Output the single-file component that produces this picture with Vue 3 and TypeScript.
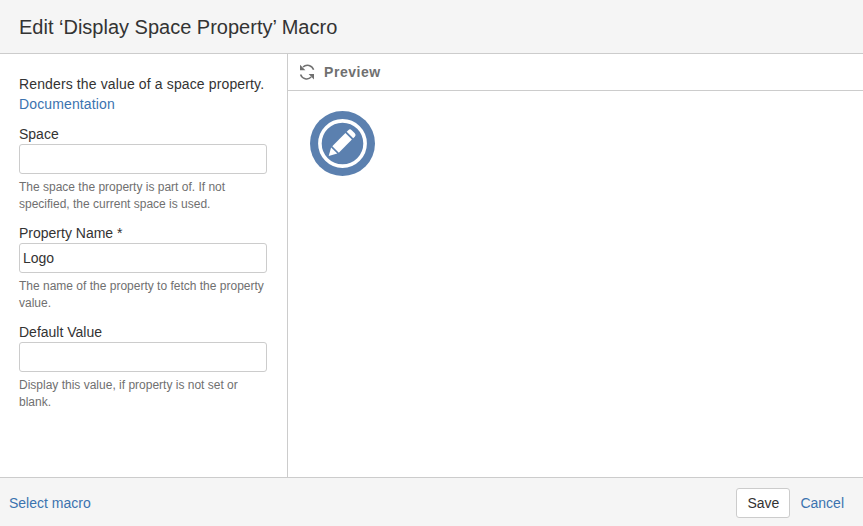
<template>
  <div class="dialog">
    <header class="head">
      <h2>Edit ‘Display Space Property’ Macro</h2>
    </header>
    <div class="body">
      <form class="params" @submit.prevent>
        <p class="intro">
          Renders the value of a space property.<br>
          <a href="#">Documentation</a>
        </p>
        <div v-for="field in fields" :key="field.label" class="field">
          <label>{{ field.label }}</label>
          <input type="text" :value="field.value">
          <div class="desc">{{ field.desc }}</div>
        </div>
      </form>
      <section class="preview">
        <div class="preview-head">
          <svg class="refresh" width="16" height="16" viewBox="0 0 16 16" fill="none" stroke="#707070" stroke-width="1.5">
            <path d="M14.6 5.8A6.4 6.4 0 0 0 4 3" />
            <path d="M1.6 10.4A6.4 6.4 0 0 0 12.2 13" />
            <path d="M1 .8v5.4h5.4z" fill="#707070" stroke="none" />
            <path d="M15 15.4V10H9.6z" fill="#707070" stroke="none" />
          </svg>
          <span>Preview</span>
        </div>
        <div class="preview-body">
          <svg width="65" height="65" viewBox="0 0 65 65">
            <circle cx="32.5" cy="32.5" r="32.5" fill="#5b80af" />
            <circle cx="32.5" cy="32.5" r="22.6" fill="none" stroke="#fff" stroke-width="3.6" />
            <path d="M18.7 45l2.4-8.6 6.2 6.2z" fill="#fff" />
            <path d="M22.3 35.2L35.4 22.1l6.5 6.5-13.1 13.1z" fill="#fff" />
            <path d="M36.7 20.8l1.6-1.6a2.4 2.4 0 0 1 3.4 0l3.1 3.1a2.4 2.4 0 0 1 0 3.4l-1.6 1.6z" fill="#fff" />
          </svg>
        </div>
      </section>
    </div>
    <footer class="foot">
      <a href="#">Select macro</a>
      <div class="actions">
        <button type="button">Save</button>
        <a href="#">Cancel</a>
      </div>
    </footer>
  </div>
</template>

<script setup lang="ts">
interface Field {
  label: string
  value: string
  desc: string
}

const fields: Field[] = [
  { label: 'Space', value: '', desc: 'The space the property is part of. If not specified, the current space is used.' },
  { label: 'Property Name *', value: 'Logo', desc: 'The name of the property to fetch the property value.' },
  { label: 'Default Value', value: '', desc: 'Display this value, if property is not set or blank.' }
]
</script>

<style>
html, body {
  margin: 0;
  background: #fff;
}
</style>

<style scoped>
.dialog {
  width: 863px;
  height: 526px;
  display: flex;
  flex-direction: column;
  font-family: "Liberation Sans", Arial, sans-serif;
  font-size: 14px;
  line-height: 20px;
  color: #333;
  overflow: hidden;
}

a {
  color: #3b73af;
  text-decoration: none;
}

.head {
  height: 53px;
  flex: none;
  background: #f5f5f5;
  border-bottom: 1px solid #ccc;
  padding: 0 19px;
  display: flex;
  align-items: center;
}

.head h2 {
  margin: 0;
  font-size: 20px;
  font-weight: 400;
  line-height: 28px;
}

.body {
  flex: 1;
  display: flex;
  min-height: 0;
}

.params {
  width: 288px;
  flex: none;
  box-sizing: border-box;
  border-right: 1px solid #ccc;
  padding: 20px 20px 0 19px;
}

.intro {
  margin: 0 0 10px;
  letter-spacing: .13px;
}

.field {
  margin-bottom: 10px;
}

.field label {
  display: block;
  height: 20px;
}

.field input {
  display: block;
  box-sizing: border-box;
  width: 248px;
  height: 30px;
  border: 1px solid #ccc;
  border-radius: 3px;
  padding: 0 3px;
  margin: 0;
  font: inherit;
  color: #333;
  background: #fff;
  outline: none;
}

.desc {
  margin-top: 5px;
  font-size: 12px;
  line-height: 17px;
  color: #707070;
}

.preview {
  flex: 1;
  min-width: 0;
}

.preview-head {
  height: 36px;
  border-bottom: 1px solid #ccc;
  display: flex;
  align-items: center;
  gap: 9px;
  padding-left: 11px;
  font-weight: 700;
  color: #707070;
  letter-spacing: .55px;
}

.refresh {
  flex: none;
}

.preview-body {
  padding: 20px 22px;
}

.preview-body svg {
  display: block;
}

.foot {
  height: 47px;
  flex: none;
  background: #f5f5f5;
  border-top: 1px solid #ccc;
  padding: 1px 19px 0 9px;
  display: flex;
  align-items: center;
  justify-content: space-between;
}

.actions {
  display: flex;
  align-items: center;
  gap: 10px;
}

.actions button {
  height: 30px;
  width: 54px;
  padding: 0;
  border: 1px solid #ccc;
  border-radius: 3px;
  background: #fff;
  color: #333;
  font: inherit;
}
</style>
